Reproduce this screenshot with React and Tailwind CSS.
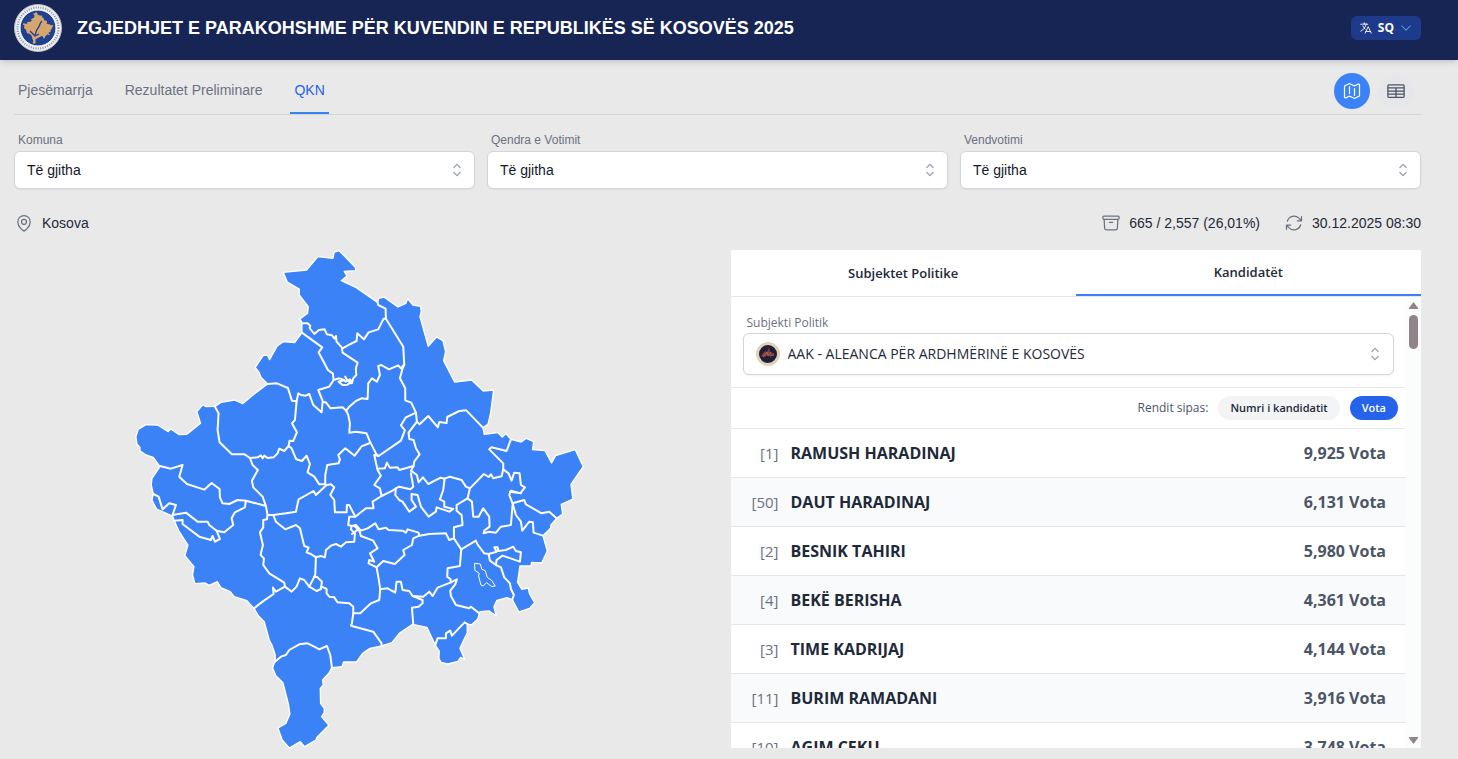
import { useState } from "react";
import {
  HiOutlineArchiveBox,
  HiOutlineArrowPath,
  HiOutlineLanguage,
  HiOutlineMap,
  HiOutlineMapPin,
  HiOutlineTableCells,
  HiChevronDown,
  HiChevronUpDown,
} from "react-icons/hi2";

const sections = ["Pjesëmarrja", "Rezultatet Preliminare", "QKN"];

const filters = [
  { id: "komuna", label: "Komuna" },
  { id: "qendra", label: "Qendra e Votimit" },
  { id: "vendvotimi", label: "Vendvotimi" },
];

const candidates = [
  { number: 1, name: "RAMUSH HARADINAJ", votes: 9925 },
  { number: 50, name: "DAUT HARADINAJ", votes: 6131 },
  { number: 2, name: "BESNIK TAHIRI", votes: 5980 },
  { number: 4, name: "BEKË BERISHA", votes: 4361 },
  { number: 3, name: "TIME KADRIJAJ", votes: 4144 },
  { number: 11, name: "BURIM RAMADANI", votes: 3916 },
  { number: 10, name: "AGIM ÇEKU", votes: 3748 },
];

const outline =
  "M462,97 532,90 566,50 611,55 615,36 630,32 678,82 680,92 645,94 653,108 636,122 680,142 720,170 745,187 748,175 764,171 806,201 830,190 835,176 851,195 874,199 876,215 872,230 897,319 922,291 941,302 949,335 943,362 976,426 1027,420 1062,453 1093,450 1084,520 1076,553 1061,563 1065,583 1106,578 1119,591 1130,581 1145,598 1176,606 1191,595 1213,605 1210,629 1247,632 1267,669 1279,647 1338,629 1362,680 1325,733 1331,777 1296,793 1300,822 1282,835 1265,855 1264,865 1241,887 1254,933 1237,969 1207,967 1205,978 1172,978 1165,1027 1178,1048 1197,1044 1201,1062 1216,1088 1201,1105 1169,1116 1149,1079 1133,1073 1103,1081 1094,1100 1101,1128 1080,1113 1052,1115 1045,1138 1026,1155 1014,1152 1014,1178 992,1225 1006,1258 994,1252 986,1264 956,1272 935,1267 929,1255 930,1233 918,1215 893,1162 850,1153 810,1180 788,1208 757,1218 722,1225 700,1240 682,1266 643,1266 638,1280 608,1283 600,1298 580,1320 582,1335 573,1345 574,1390 585,1405 585,1418 577,1430 599,1456 563,1492 560,1500 526,1520 513,1505 480,1524 459,1500 446,1464 470,1450 482,1422 477,1390 461,1328 440,1307 430,1284 438,1260 438,1245 428,1215 420,1200 405,1145 388,1128 374,1105 353,1082 315,1070 303,1055 275,1043 264,1025 240,1036 228,1029 197,1031 190,1005 194,980 167,947 176,915 150,875 135,842 130,828 82,807 68,780 72,762 66,735 68,715 92,680 72,652 50,645 32,632 32,622 23,612 20,590 27,568 50,554 85,555 117,575 124,567 150,584 173,583 214,550 203,515 221,494 230,500 257,499 275,487 316,480 340,491 375,462 415,432 395,412 390,398 378,382 402,346 415,346 421,359 443,319 462,305 496,308 518,278 518,247 512,237 535,220 537,200 510,165 510,147 474,126Z";

const borders = [
  "M518,250 535,250 543,257 541,264 555,282 569,270 586,268 593,283 608,286 616,296 620,288 622,305 640,325 660,314 682,303 684,280 704,298 718,277 747,268 763,236 770,236 769,206 747,195 745,187",
  "M770,236 822,320 825,375 820,385 812,415 828,445 828,481 846,488 860,518 863,545 871,553 897,528 926,562 930,546 952,549 954,531 990,513 1011,511 1061,563",
  "M518,278 579,322 568,337 596,390 611,401 613,420 600,440 567,450 582,487 590,487 604,505 640,502 651,512 660,500 680,483 697,475 715,477 717,430 728,415 743,425 752,405 747,378 756,375 779,388 807,376 815,385 825,373",
  "M638,325 640,338 685,368 680,385 681,405 672,415 668,430 655,422 648,410 M613,420 630,415 640,418 650,425 662,418 668,425 655,434 640,435 628,425 645,420",
  "M415,432 443,430 476,444 488,482 502,484 507,460 515,465 530,467 540,462 552,495 577,517 580,487",
  "M502,484 497,540 488,550 503,577 492,603 481,602 478,618 465,633 450,626 445,640 433,652 415,654 405,647 400,655 395,646 385,652 362,654 346,643 308,643 271,607 265,570 268,520 257,500",
  "M478,618 487,625 501,658 518,663 532,647 542,672 535,697 555,710 570,733 588,733 588,705 594,675 628,670 632,658 627,645 648,625 676,647 697,619 722,609",
  "M651,512 657,525 662,550 660,578 680,575 712,580 722,605 740,640 748,648 815,602 827,571 815,556 830,532 860,518",
  "M863,545 838,578 840,597 853,600 860,625 871,643 855,665 853,678 810,690 805,682 782,683 773,668 767,685 745,686",
  "M748,648 735,645 745,690 755,707 735,735 752,745 757,768 790,752 800,745 810,740 843,748 852,740 845,700",
  "M1145,598 1132,633 1087,622 1080,628 1122,670 1122,688 1117,709 1092,715 1085,703 1078,711 1064,702 1022,745 1010,740 997,720 962,710 946,716 934,713 897,732 881,712 868,727 863,705 845,692 853,678",
  "M1122,688 1138,700 1147,722 1155,698 1171,700 1175,735 1187,742 1173,760 1145,752 1140,765 1150,790 1185,780 1190,793 1237,820 1260,815 1282,835 M1142,755 1175,760",
  "M1150,790 1160,825 1175,845 1179,872 1200,845 1211,847 1213,878 1241,887",
  "M1150,795 1145,855 1115,860 1100,878 1080,875 1063,880 1065,872 1081,860 1080,830 1062,805 1048,830 1032,830 1028,785 1015,775 1022,745",
  "M1015,775 982,795 982,812 997,825 1000,855 974,862 974,895 996,928 1040,902 1044,912 1065,940 1078,942 1082,962 1100,975 1115,982 1125,1012 1142,1030 1145,1047 1154,1065 1149,1079",
  "M1078,942 1102,935 1095,922 1105,922 1107,933 1130,930 1152,920 1160,933 1175,937 1172,965 1120,947 1102,960 1100,975",
  "M996,928 992,978 955,985 954,1010 964,1018 965,1027 983,1018 978,1033 963,1052 965,1068 980,1095 1020,1105 1025,1100 1050,1120",
  "M965,1027 925,1043 910,1068 900,1055 882,1070 850,1068 840,1053 820,1050 815,1025 802,1025 798,1058 775,1045 753,1048",
  "M850,1068 880,1080 880,1090 868,1100 848,1103 852,1153",
  "M1014,1152 1006,1147 968,1187 963,1172 950,1180 950,1195 925,1195 918,1215",
  "M753,1048 750,1080 725,1090 693,1120 672,1120 668,1150 665,1157 732,1175 757,1210 757,1218",
  "M410,798 415,825 413,838 402,840 402,862 392,877 401,915 394,945 404,955 402,975 420,1000 465,1028 467,1040 440,1055 431,1043 433,1062 400,1085 374,1105",
  "M560,950 558,1005 540,1040 525,1020 512,1015 502,1040 487,1055 467,1040",
  "M540,1040 562,1053 575,1047 578,1025 565,1012 555,1010 M578,1040 592,1047 592,1060 600,1070 615,1072 625,1087 660,1090 672,1100 672,1120",
  "M415,825 432,825 470,820 500,815 508,778 553,753 560,765 592,735 605,733 615,742 603,765 615,780 617,817 652,817 653,795 660,795 678,830 710,805 733,805 730,785 757,768",
  "M432,825 440,845 468,868 500,855 512,865 525,918 538,922 532,937 545,942 560,952 575,948 587,952 590,930 605,917 620,912 635,920 650,907 675,905 677,880 665,868 667,858 657,855 660,830 678,830",
  "M800,745 798,765 810,780 820,785 840,815 860,800 847,780 847,762 865,765 875,800 898,830 920,815 922,802 960,815 972,807 945,800 945,785 932,778 942,750 946,716",
  "M667,858 680,855 695,872 715,865 738,850 748,868 770,863 778,870 820,872 830,878 835,868 868,878 870,887 900,882 950,880 960,900 974,895",
  "M870,887 852,895 848,915 822,930 826,945 815,955 797,972 762,963 742,982 748,1015 753,1048",
  "M742,982 718,970 720,960 735,965 722,940 745,925 732,902 695,888 690,872 M675,858 687,868 668,882",
  "M92,678 125,686 160,675 150,710 173,732 225,749 247,729 271,747 272,772 280,790 300,792 325,780 350,782 410,798 400,770 385,755 372,742 368,722 386,690 370,675 362,654",
  "M350,782 347,802 317,817 307,835 312,855 285,877 262,872 240,855 235,845 205,845 170,818 130,825 140,795 120,790 100,808 88,770 72,762",
  "M135,842 160,840 160,852 210,890 245,900 250,888 257,905 272,897 262,872",
  "M436,1266 455,1250 470,1245 480,1230 510,1213 535,1210 555,1220 570,1228 593,1218 603,1245 608,1283",
];

const KosovoMap = () => (
  <svg
    viewBox="-6 30 1392 1494"
    className="h-[498px] w-full overflow-visible"
    role="img"
    aria-label="Kosova"
    strokeLinejoin="round"
    strokeLinecap="round"
  >
    <path d={outline} fill="#3b82f6" stroke="#fff" strokeWidth="4" />
    <g fill="none" stroke="#fff" strokeWidth="6">
      {borders.map((d) => (
        <path key={d} d={d} />
      ))}
    </g>
    <path
      d="M1037,970 1053,972 1058,988 1068,992 1074,1012 1088,1022 1098,1038 1088,1040 1072,1028 1062,1038 1055,1035 1048,1008 1050,1000 1038,992Z"
      fill="none"
      stroke="#fff"
      strokeWidth="3"
    />
  </svg>
);

const Logo = () => (
  <svg viewBox="0 0 48 48" className="size-12 shrink-0" aria-hidden="true">
    <circle cx="24" cy="24" r="23.5" fill="#eceef2" stroke="#b6bac4" />
    <circle
      cx="24"
      cy="24"
      r="20.5"
      fill="none"
      stroke="#8a90a0"
      strokeWidth="2"
      strokeDasharray="1 1.4"
    />
    <circle cx="24" cy="24" r="18" fill="#1e4191" stroke="#fff" strokeWidth="1" />
    <g transform="translate(8.5 7.5) scale(0.0225 0.0212)">
      <path d={outline} fill="#d6a570" />
    </g>
    <path
      d="M28 17c-3 3-2 5-4 7s-2 5-3 7M16 27l5 5 4-2"
      fill="none"
      stroke="#1e4191"
      strokeWidth="1.3"
    />
  </svg>
);

const PartyLogo = () => (
  <svg viewBox="0 0 24 24" className="size-6" aria-hidden="true">
    <circle cx="12" cy="12" r="11.5" fill="#d8d5d0" stroke="#f5c98a" />
    <circle cx="12" cy="12" r="9" fill="#211f36" />
    <path d="M5 14l4-5 2 1 2-5 1 5 5 2-4 2-4-1-2 2z" fill="#7d4044" />
    <path d="M7 15l4-5 1 4 3-4M14 14l4-1" fill="none" stroke="#c9683f" strokeWidth="0.9" />
  </svg>
);

const Filter = ({ id, label }) => (
  <div className="flex-1">
    <label htmlFor={id} className="block pl-1 text-xs leading-5 text-gray-500">
      {label}
    </label>
    <div className="relative mt-px">
      <select
        id={id}
        className="h-[38px] w-full appearance-none rounded-md border border-gray-300 bg-white px-3 text-sm text-gray-900 shadow-xs"
      >
        <option>Të gjitha</option>
      </select>
      <HiChevronUpDown className="pointer-events-none absolute top-[9px] right-2 size-5 text-gray-400" />
    </div>
  </div>
);

const Scrollbar = () => (
  <div className="flex w-[15px] shrink-0 flex-col items-center bg-[#fbfdfc] py-1 text-[#8f8489]">
    <svg viewBox="0 0 9 7" className="mt-px h-[7px] w-[9px]" fill="currentColor">
      <path d="M4.5 0 9 6v1H0V6z" />
    </svg>
    <div className="mt-[6px] h-[34px] w-[9px] rounded-full bg-[#8f8489]" />
    <svg viewBox="0 0 9 7" className="mt-auto h-[7px] w-[9px]" fill="currentColor">
      <path d="M4.5 7 9 1V0H0v1z" />
    </svg>
  </div>
);

const CandidatesPanel = () => {
  const [tab, setTab] = useState("Kandidatët");
  const [sortBy, setSortBy] = useState("Vota");

  return (
    <section className="flex h-[498px] flex-1 flex-col bg-white font-['Open_Sans',sans-serif] text-gray-800">
      <div className="flex h-[47px] shrink-0 border-b border-gray-200">
        {["Subjektet Politike", "Kandidatët"].map((name) => (
          <button
            key={name}
            onClick={() => setTab(name)}
            className={`flex-1 pt-0.5 text-[13px] font-semibold ${
              tab === name ? "border-b-2 border-[#3b82f6]" : ""
            }`}
          >
            {name}
          </button>
        ))}
      </div>
      <div className="flex min-h-0 flex-1">
        <div className="flex-1 overflow-y-auto [scrollbar-width:none]">
          <div className="border-b border-gray-200 px-3 pt-4 pb-3">
            <label
              htmlFor="subjekti"
              className="block pl-1 text-xs leading-5 text-gray-500"
            >
              Subjekti Politik
            </label>
            <div className="relative">
              <select
                id="subjekti"
                className="h-[42px] w-full appearance-none rounded-md border border-gray-300 bg-white pr-8 pl-11 text-sm font-medium text-gray-800 shadow-xs"
              >
                <option>AAK - ALEANCA PËR ARDHMËRINË E KOSOVËS</option>
              </select>
              <div className="pointer-events-none absolute top-[9px] left-[13px]">
                <PartyLogo />
              </div>
              <HiChevronUpDown className="pointer-events-none absolute top-[11px] right-[9px] size-5 text-gray-400" />
            </div>
          </div>
          <div className="flex h-[41px] items-center justify-end gap-[10px] border-b border-gray-200 pr-2 text-[11px]">
            <span className="text-xs text-gray-600">Rendit sipas:</span>
            {["Numri i kandidatit", "Vota"].map((name) => (
              <button
                key={name}
                onClick={() => setSortBy(name)}
                className={`h-6 rounded-full px-3 font-semibold ${
                  sortBy === name ? "bg-[#2563eb] text-white" : "bg-gray-100"
                }`}
              >
                {name}
              </button>
            ))}
          </div>
          <table className="w-full border-separate border-spacing-0">
            <tbody>
              {candidates.map((candidate) => (
                <tr
                  key={candidate.number}
                  className="h-[49px] even:bg-gray-50 *:border-b *:border-gray-200"
                >
                  <td className="w-12 text-right text-[15px] text-gray-500">
                    [{candidate.number}]
                  </td>
                  <td className="pl-3 text-base font-bold">{candidate.name}</td>
                  <td className="pr-5 text-right text-base font-bold text-gray-600">
                    {candidate.votes.toLocaleString("en-US")} Vota
                  </td>
                </tr>
              ))}
            </tbody>
          </table>
        </div>
        <Scrollbar />
      </div>
    </section>
  );
};

const App = () => {
  const [section, setSection] = useState("QKN");

  return (
    <div className="h-screen overflow-hidden bg-[#e9e9e9] font-['Liberation_Sans',Arial,sans-serif]">
      <header className="flex h-[60px] items-center bg-[#172554] pr-[37px] pb-1 pl-[14px] shadow-md">
        <Logo />
        <h1 className="ml-[15px] text-lg font-bold text-white">
          ZGJEDHJET E PARAKOHSHME PËR KUVENDIN E REPUBLIKËS SË KOSOVËS 2025
        </h1>
        <button className="ml-auto flex h-6 items-center rounded-md bg-[#1e3a8a] px-2 font-['Open_Sans',sans-serif] text-xs font-bold text-white">
          <HiOutlineLanguage className="size-[14px]" />
          <span className="mx-[5px]">SQ</span>
          <HiChevronDown className="size-[14px] text-[#60a5fa]" />
        </button>
      </header>

      <main className="pr-[37px] pl-[14px]">
        <nav className="mt-1 flex h-[51px] border-b border-gray-300">
          {sections.map((name) => (
            <button
              key={name}
              onClick={() => setSection(name)}
              className={`mr-6 border-b-2 px-1 pt-1 text-sm ${
                section === name
                  ? "border-[#3b82f6] text-[#2563eb]"
                  : "border-transparent text-gray-500"
              }`}
            >
              {name}
            </button>
          ))}
          <div className="mt-[9px] ml-auto flex gap-2 pr-[7px]">
            <button
              aria-label="Harta"
              className="flex size-9 items-center justify-center rounded-full bg-[#3b82f6] text-white"
            >
              <HiOutlineMap className="size-5" />
            </button>
            <button
              aria-label="Tabela"
              className="flex size-9 items-center justify-center rounded-full bg-[#e5e7eb] text-gray-600"
            >
              <HiOutlineTableCells className="size-5" />
            </button>
          </div>
        </nav>

        <div className="mt-[15px] flex gap-3">
          {filters.map((filter) => (
            <Filter key={filter.id} {...filter} />
          ))}
        </div>

        <div className="mt-6 flex h-5 items-center text-sm text-gray-800">
          <HiOutlineMapPin className="mr-2 size-5 text-gray-500" />
          Kosova
          <HiOutlineArchiveBox className="mr-2 ml-auto size-5 text-gray-500" />
          665 / 2,557 (26,01%)
          <HiOutlineArrowPath className="mr-2 ml-6 size-5 text-gray-500" />
          30.12.2025 08:30
        </div>

        <div className="mt-[17px] flex gap-[26px]">
          <div className="flex-1">
            <KosovoMap />
          </div>
          <CandidatesPanel />
        </div>
      </main>
    </div>
  );
};

export default App;
